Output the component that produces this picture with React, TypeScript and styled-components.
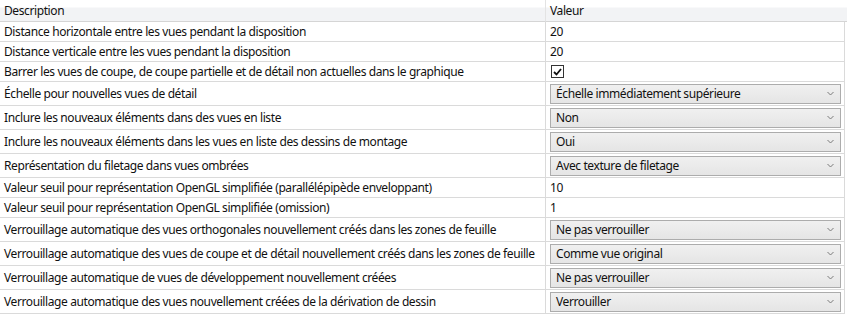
import styled, { createGlobalStyle } from "styled-components";

const GlobalStyle = createGlobalStyle`
  html, body {
    margin: 0;
    padding: 0;
    background: #ffffff;
  }
  body {
    font-family: "Noto Sans", "Open Sans", sans-serif;
    font-size: 12px;
    letter-spacing: -0.4px;
    color: #111;
  }
`;

const Grid = styled.div`
  width: 845px;
  display: grid;
  grid-template-columns: 546px 299px;
`;

const HeadCell = styled.div<{ $last?: boolean }>`
  height: 22px;
  box-sizing: border-box;
  padding: 0 4px;
  display: flex;
  align-items: center;
  background: linear-gradient(#ffffff 0, #ffffff 7px, #f2f3f5 8px, #f2f3f5 100%);
  border-bottom: 1px solid #d5d5d5;
  border-right: ${(p) => (p.$last ? "none" : "1px solid #e3e3e3")};
  width: ${(p) => (p.$last ? "301px" : "auto")};
`;

const Cell = styled.div<{ $tall?: boolean; $value?: boolean }>`
  height: ${(p) => (p.$tall ? "24px" : "20px")};
  box-sizing: border-box;
  padding: ${(p) => (p.$value ? "0 3px 0 4px" : "0 4px")};
  display: flex;
  align-items: center;
  border-bottom: 1px solid #dadada;
  border-right: 1px solid #dadada;
  white-space: nowrap;
  overflow: hidden;
`;

const Check = styled.span`
  width: 11px;
  height: 11px;
  border: 1px solid #333;
  display: flex;
  align-items: center;
  justify-content: center;
  margin-left: 1px;
`;

const Select = styled.div`
  flex: 1;
  height: 20px;
  box-sizing: border-box;
  border: 1px solid #acacac;
  background: linear-gradient(#f0f0f0, #e5e5e5);
  display: flex;
  align-items: center;
  justify-content: space-between;
  padding: 0 6px 0 5px;
`;

const Chevron = () => (
  <svg width="7" height="5" viewBox="0 0 7 5">
    <path d="M0.5 1 L3.5 4 L6.5 1" fill="none" stroke="#7a7a7a" strokeWidth="1" />
  </svg>
);

type Row =
  | { label: string; kind: "text"; value: string }
  | { label: string; kind: "check" }
  | { label: string; kind: "select"; value: string };

const rows: Row[] = [
  { label: "Distance horizontale entre les vues pendant la disposition", kind: "text", value: "20" },
  { label: "Distance verticale entre les vues pendant la disposition", kind: "text", value: "20" },
  { label: "Barrer les vues de coupe, de coupe partielle et de détail non actuelles dans le graphique", kind: "check" },
  { label: "Échelle pour nouvelles vues de détail", kind: "select", value: "Échelle immédiatement supérieure" },
  { label: "Inclure les nouveaux éléments dans des vues en liste", kind: "select", value: "Non" },
  { label: "Inclure les nouveaux éléments dans les vues en liste des dessins de montage", kind: "select", value: "Oui" },
  { label: "Représentation du filetage dans vues ombrées", kind: "select", value: "Avec texture de filetage" },
  { label: "Valeur seuil pour représentation OpenGL simplifiée (parallélépipède enveloppant)", kind: "text", value: "10" },
  { label: "Valeur seuil pour représentation OpenGL simplifiée (omission)", kind: "text", value: "1" },
  { label: "Verrouillage automatique des vues orthogonales nouvellement créés dans les zones de feuille", kind: "select", value: "Ne pas verrouiller" },
  { label: "Verrouillage automatique des vues de coupe et de détail nouvellement créés dans les zones de feuille", kind: "select", value: "Comme vue original" },
  { label: "Verrouillage automatique de vues de développement nouvellement créées", kind: "select", value: "Ne pas verrouiller" },
  { label: "Verrouillage automatique des vues nouvellement créées de la dérivation de dessin", kind: "select", value: "Verrouiller" },
];

function App() {
  return (
    <>
      <GlobalStyle />
      <Grid>
        <HeadCell>Description</HeadCell>
        <HeadCell $last>Valeur</HeadCell>
        {rows.map((row) => {
          const tall = row.kind === "select";
          return [
            <Cell key={row.label + "-l"} $tall={tall}>{row.label}</Cell>,
            <Cell key={row.label + "-v"} $tall={tall} $value>
              {row.kind === "text" && row.value}
              {row.kind === "check" && (
                <Check>
                  <svg width="9" height="8" viewBox="0 0 9 8">
                    <path d="M1 4 L3.5 6.5 L8 1" fill="none" stroke="#111" strokeWidth="1.8" />
                  </svg>
                </Check>
              )}
              {row.kind === "select" && (
                <Select>
                  <span>{row.value}</span>
                  <Chevron />
                </Select>
              )}
            </Cell>,
          ];
        })}
      </Grid>
    </>
  );
}

export default App;
